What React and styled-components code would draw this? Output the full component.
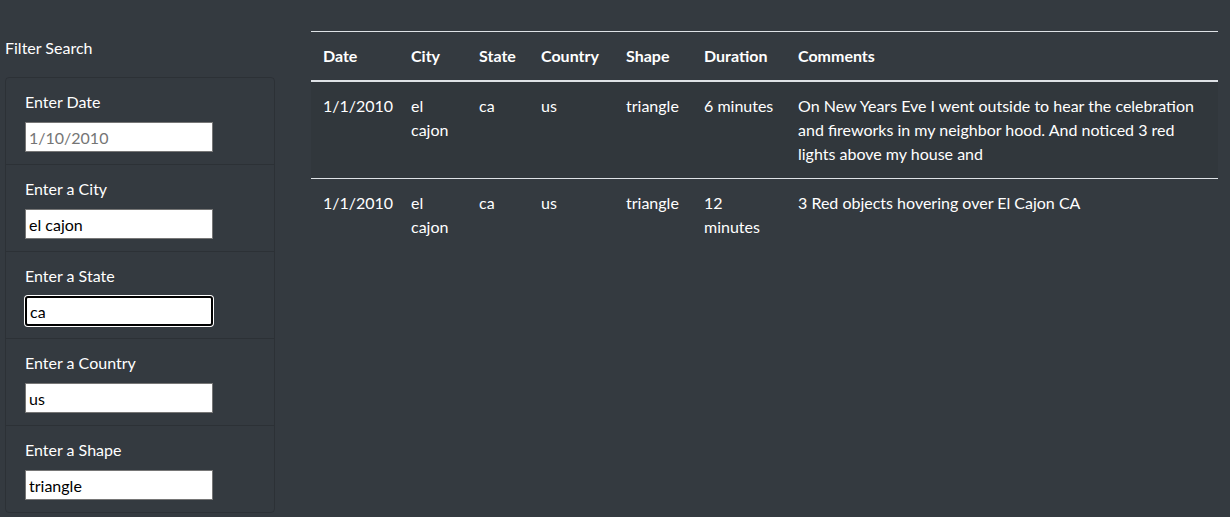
import React from 'react';
import styled, { createGlobalStyle } from 'styled-components';

const GlobalStyle = createGlobalStyle`
body {
  margin: 0;
  background-color: #343a40;
  color: #ffffff;
  font-family: "Segoe UI", Lato, "Noto Sans", sans-serif;
  font-size: 16px;
  line-height: 1.5;
}
`;

const Page = styled.div`
display: flex;
align-items: flex-start;
padding: 31px 12px 6px 5px;
height: 517px;
box-sizing: border-box;
`;

const Sidebar = styled.div`
width: 270px;
flex-shrink: 0;
margin-right: 36px;
`;

const SideTitle = styled.div`
margin-top: 5px;
margin-bottom: 17px;
`;

const Card = styled.div`
border: 1px solid rgba(0, 0, 0, 0.15);
border-radius: 4px;
`;

const Item = styled.div`
padding: 12px 20px 12px 19px;
border-bottom: 1px solid rgba(0, 0, 0, 0.15);
&:last-child {
  border-bottom: none;
}
`;

const Label = styled.label`
display: block;
margin-bottom: 8px;
`;

const Input = styled.input`
display: block;
box-sizing: border-box;
width: 188px;
height: 30px;
padding: 1px 3px;
font-family: "Segoe UI", Lato, "Noto Sans", sans-serif;
font-size: 16px;
color: #000000;
background: #ffffff;
border: ${p => (p.$focused ? '2px solid #000000' : '1px solid #767676')};
border-radius: ${p => (p.$focused ? '3px' : '0')};
box-shadow: ${p => (p.$focused ? '0 0 0 1px #ffffff' : 'none')};
outline: none;
&::placeholder {
  color: #757575;
}
`;

const TableWrap = styled.div`
flex: 1;
`;

const Table = styled.table`
width: 100%;
border-collapse: collapse;
table-layout: fixed;
border-top: 1px solid #dee2e6;
`;

const Th = styled.th`
text-align: left;
font-weight: bold;
padding: 12px;
border-bottom: 2px solid #dee2e6;
vertical-align: bottom;
`;

const Row = styled.tr`
background-color: ${p => (p.$striped ? 'rgba(0, 0, 0, 0.05)' : 'transparent')};
`;

const Td = styled.td`
padding: 12px;
vertical-align: top;
border-top: 1px solid #dee2e6;
`;

const filters = [
  { label: 'Enter Date', value: '', placeholder: '1/10/2010' },
  { label: 'Enter a City', value: 'el cajon' },
  { label: 'Enter a State', value: 'ca', focused: true },
  { label: 'Enter a Country', value: 'us' },
  { label: 'Enter a Shape', value: 'triangle' },
];

const columns = [
  { name: 'Date', width: 88 },
  { name: 'City', width: 68 },
  { name: 'State', width: 62 },
  { name: 'Country', width: 85 },
  { name: 'Shape', width: 78 },
  { name: 'Duration', width: 94 },
  { name: 'Comments' },
];

const rows = [
  ['1/1/2010', 'el cajon', 'ca', 'us', 'triangle', '6 minutes',
    'On New Years Eve I went outside to hear the celebration and fireworks in my neighbor hood. And noticed 3 red lights above my house and'],
  ['1/1/2010', 'el cajon', 'ca', 'us', 'triangle', '12 minutes',
    '3 Red objects hovering over El Cajon CA'],
];

const App = () => {
  return (
    <>
      <GlobalStyle />
      <Page>
        <Sidebar>
          <SideTitle>Filter Search</SideTitle>
          <Card>
            {filters.map(f => (
              <Item key={f.label}>
                <Label>{f.label}</Label>
                <Input
                  type="text"
                  defaultValue={f.value}
                  placeholder={f.placeholder}
                  $focused={f.focused}
                />
              </Item>
            ))}
          </Card>
        </Sidebar>
        <TableWrap>
          <Table>
            <colgroup>
              {columns.map(c => (
                <col key={c.name} style={c.width ? { width: c.width } : undefined} />
              ))}
            </colgroup>
            <thead>
              <tr>
                {columns.map(c => <Th key={c.name}>{c.name}</Th>)}
              </tr>
            </thead>
            <tbody>
              {rows.map((r, i) => (
                <Row key={i} $striped={i % 2 === 0}>
                  {r.map((cell, j) => <Td key={j}>{cell}</Td>)}
                </Row>
              ))}
            </tbody>
          </Table>
        </TableWrap>
      </Page>
    </>
  );
};

export default App;
